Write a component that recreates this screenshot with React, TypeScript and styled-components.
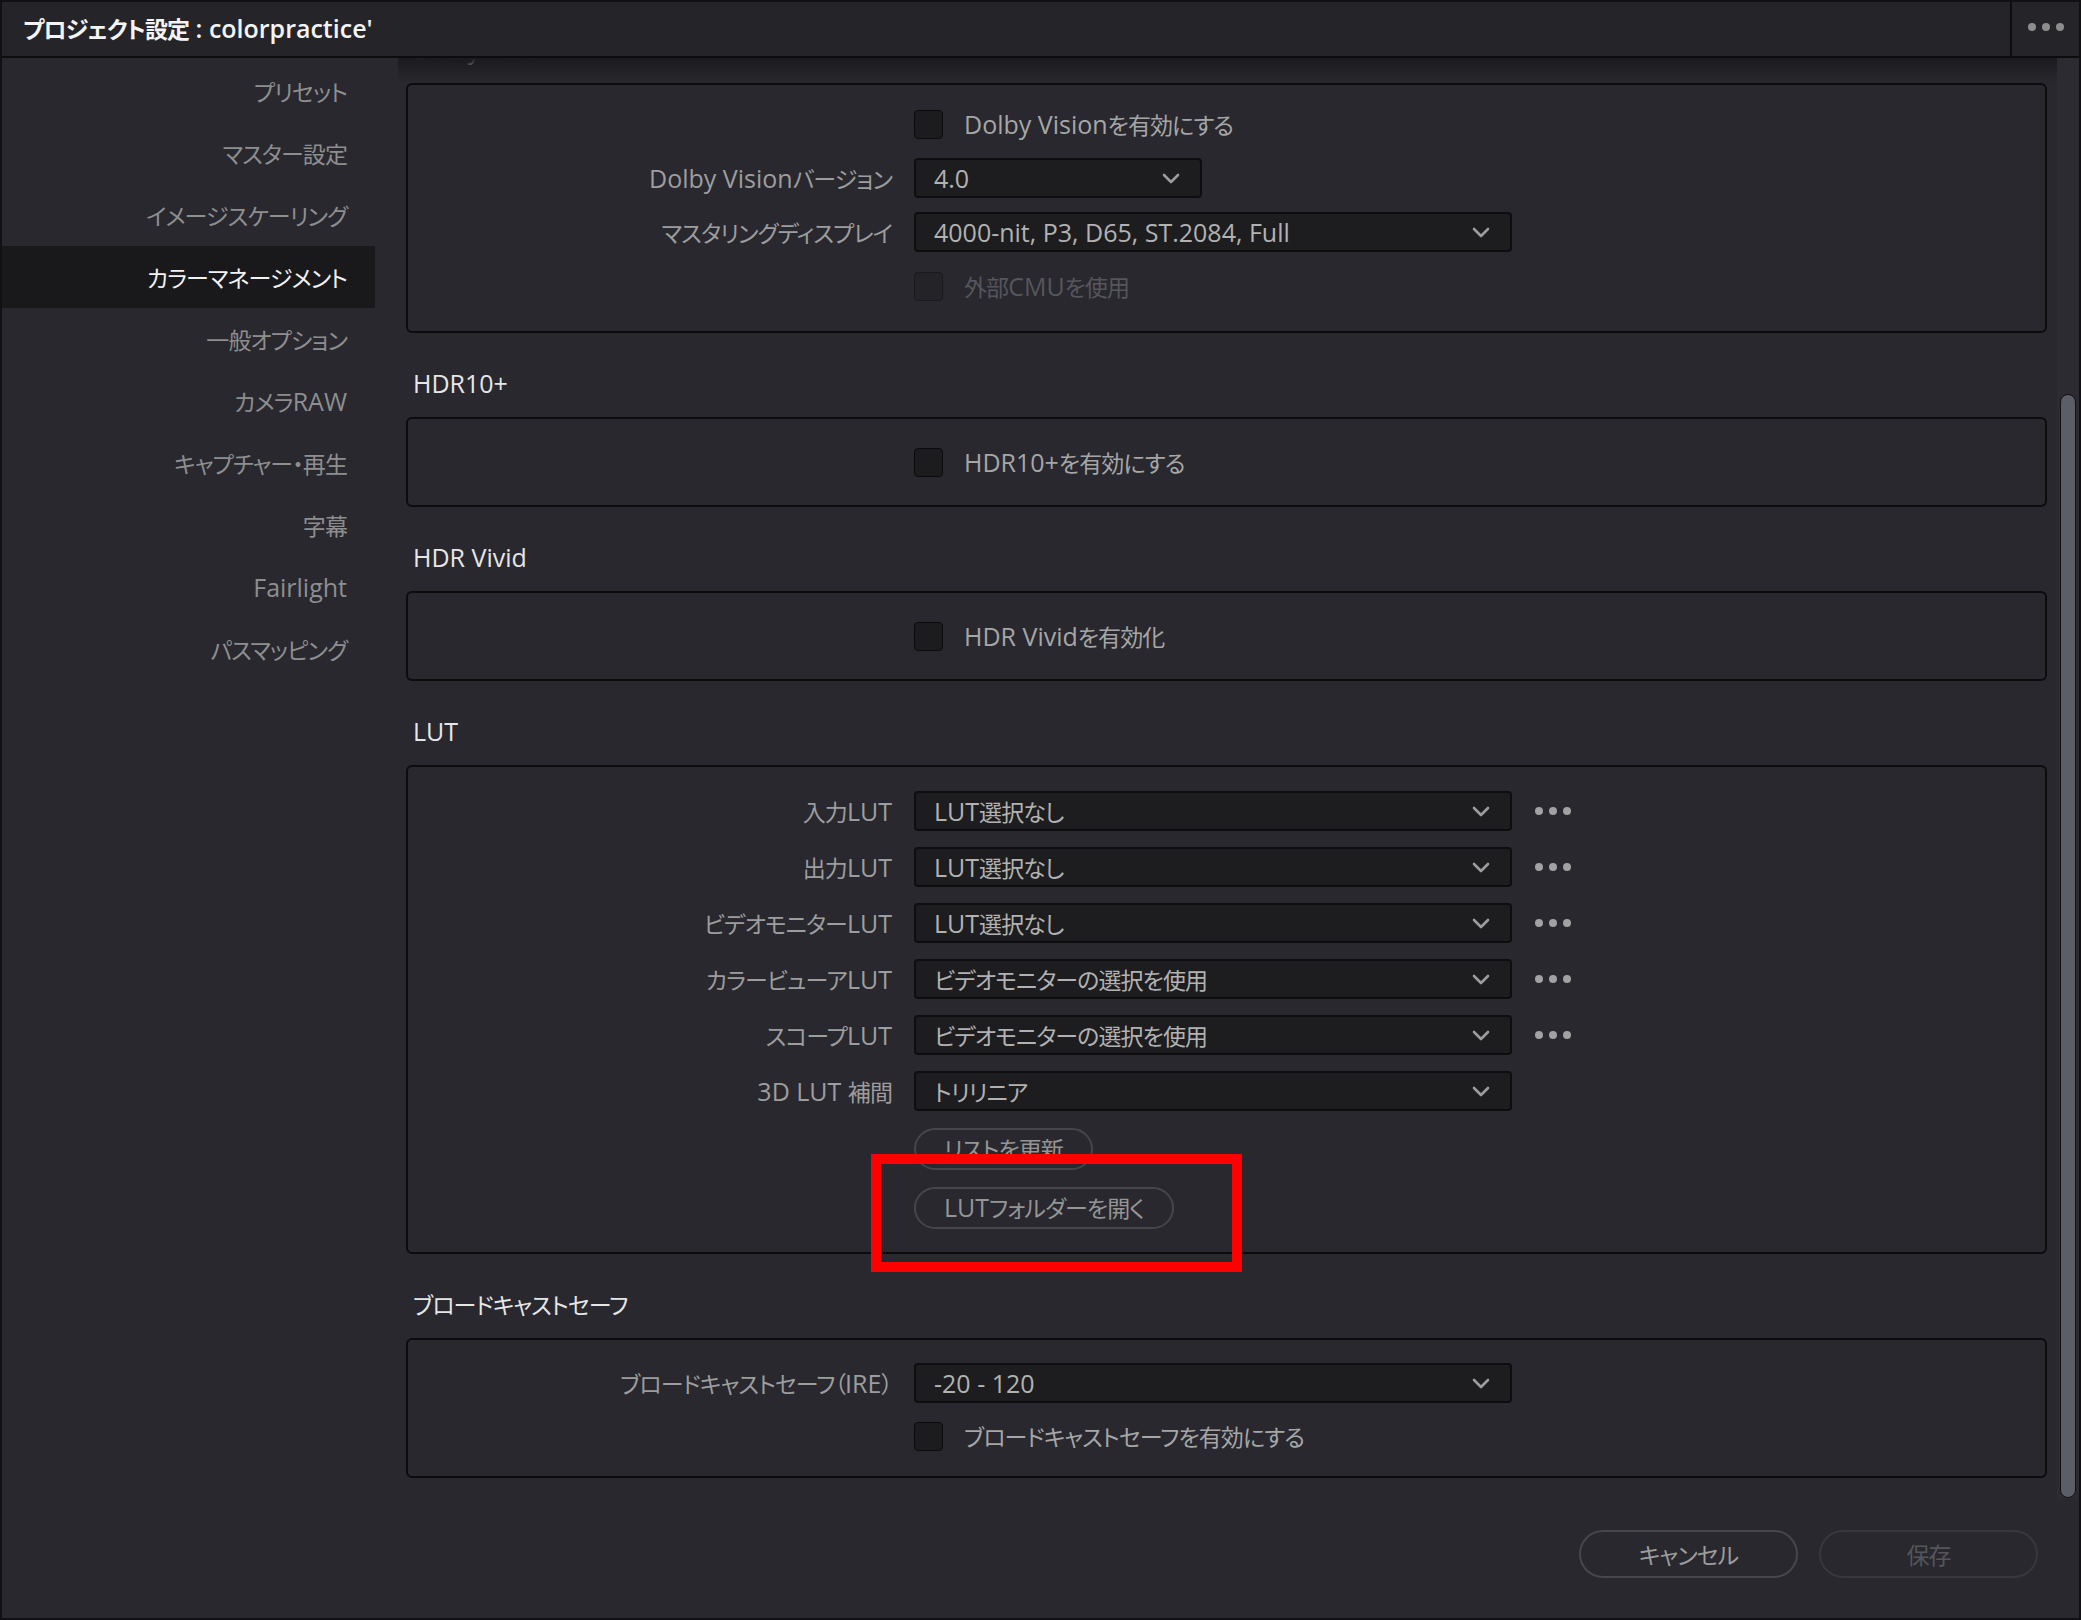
import React from 'react';
import styled, { createGlobalStyle } from 'styled-components';

const GlobalStyle = createGlobalStyle`
  html, body {
    margin: 0;
    padding: 0;
    background: #0c0c0d;
  }
  * {
    box-sizing: border-box;
  }
  body {
    font-family: "Open Sans", "Noto Sans CJK JP", sans-serif;
    font-size: 25px;
    font-feature-settings: "palt";
  }
`;

const sidebarItems = [
  'プリセット',
  'マスター設定',
  'イメージスケーリング',
  'カラーマネージメント',
  '一般オプション',
  'カメラRAW',
  'キャプチャー・再生',
  '字幕',
  'Fairlight',
  'パスマッピング',
];

const lutRows = [
  { label: '入力LUT', value: 'LUT選択なし', more: true },
  { label: '出力LUT', value: 'LUT選択なし', more: true },
  { label: 'ビデオモニターLUT', value: 'LUT選択なし', more: true },
  { label: 'カラービューアLUT', value: 'ビデオモニターの選択を使用', more: true },
  { label: 'スコープLUT', value: 'ビデオモニターの選択を使用', more: true },
  { label: '3D LUT 補間', value: 'トリリニア', more: false },
];

const CJK = /([\u3000-\u30ff\u4e00-\u9fff\uff00-\uffef]+)/;

function jp(text: string) {
  return text.split(CJK).map((part, i) =>
    CJK.test(part) ? <Kana key={i}>{part}</Kana> : part
  );
}

export default function App() {
  return (
    <>
      <GlobalStyle />
      <Window>
        <TitleBar>
          <TitleText>{jp('プロジェクト設定')} : colorpractice'</TitleText>
          <TitleMenu>
            <Dots color="#8d8d8d" />
          </TitleMenu>
        </TitleBar>

        <Body>
          <Sidebar>
            {sidebarItems.map((item, i) => (
              <SideItem key={item} $active={i === 3}>{jp(item)}</SideItem>
            ))}
          </Sidebar>

          <Main>
            <ViewportRow>
              <ScrollArea>
                <Section>
                  <SectionTitle>Dolby Vision</SectionTitle>
                  <Panel $pt={19} $pb={25} $gap={14}>
                    <FormRow>
                      <span />
                      <CheckField>
                        <Checkbox />
                        <CheckLabel>{jp('Dolby Visionを有効にする')}</CheckLabel>
                      </CheckField>
                    </FormRow>
                    <FormRow>
                      <Label>{jp('Dolby Visionバージョン')}</Label>
                      <Select value="4.0" width={288} />
                    </FormRow>
                    <FormRow>
                      <Label>{jp('マスタリングディスプレイ')}</Label>
                      <Select value="4000-nit, P3, D65, ST.2084, Full" />
                    </FormRow>
                    <FormRow>
                      <span />
                      <CheckField>
                        <Checkbox $disabled />
                        <CheckLabel $disabled>{jp('外部CMUを使用')}</CheckLabel>
                      </CheckField>
                    </FormRow>
                  </Panel>
                </Section>

                <Section>
                  <SectionTitle>HDR10+</SectionTitle>
                  <Panel $pt={23} $pb={23} $gap={0}>
                    <FormRow>
                      <span />
                      <CheckField>
                        <Checkbox />
                        <CheckLabel>{jp('HDR10+を有効にする')}</CheckLabel>
                      </CheckField>
                    </FormRow>
                  </Panel>
                </Section>

                <Section>
                  <SectionTitle>HDR Vivid</SectionTitle>
                  <Panel $pt={23} $pb={23} $gap={0}>
                    <FormRow>
                      <span />
                      <CheckField>
                        <Checkbox />
                        <CheckLabel>{jp('HDR Vividを有効化')}</CheckLabel>
                      </CheckField>
                    </FormRow>
                  </Panel>
                </Section>

                <Section>
                  <SectionTitle>LUT</SectionTitle>
                  <Panel $pt={24} $pb={23} $gap={16}>
                    {lutRows.map((row) => (
                      <FormRow key={row.label}>
                        <Label>{jp(row.label)}</Label>
                        <ControlGroup>
                          <Select value={row.value} />
                          {row.more && <MoreButton><Dots color="#a2a2a2" /></MoreButton>}
                        </ControlGroup>
                      </FormRow>
                    ))}
                    <ButtonRow>
                      <span />
                      <ButtonStack>
                        <PillButton>{jp('リストを更新')}</PillButton>
                        <Marked>
                          <PillButton>{jp('LUTフォルダーを開く')}</PillButton>
                          <Highlight />
                        </Marked>
                      </ButtonStack>
                    </ButtonRow>
                  </Panel>
                </Section>

                <Section>
                  <SectionTitle>{jp('ブロードキャストセーフ')}</SectionTitle>
                  <Panel $pt={23} $pb={20} $gap={13}>
                    <FormRow>
                      <Label>{jp('ブロードキャストセーフ（IRE）')}</Label>
                      <Select value="-20 - 120" />
                    </FormRow>
                    <FormRow>
                      <span />
                      <CheckField>
                        <Checkbox />
                        <CheckLabel>{jp('ブロードキャストセーフを有効にする')}</CheckLabel>
                      </CheckField>
                    </FormRow>
                  </Panel>
                </Section>
              </ScrollArea>

              <ScrollTrack>
                <ScrollThumb />
              </ScrollTrack>
            </ViewportRow>

            <Footer>
              <FooterButton>{jp('キャンセル')}</FooterButton>
              <FooterButton $muted>{jp('保存')}</FooterButton>
            </Footer>
          </Main>
        </Body>
      </Window>
    </>
  );
}

function Dots({ color }: { color: string }) {
  return (
    <svg width="36" height="10" viewBox="0 0 36 10">
      <circle cx="4" cy="5" r="4" fill={color} />
      <circle cx="18" cy="5" r="4" fill={color} />
      <circle cx="32" cy="5" r="4" fill={color} />
    </svg>
  );
}

function Select({ value, width = 598 }: { value: string; width?: number }) {
  return (
    <SelectBox $w={width}>
      <SelectText>{jp(value)}</SelectText>
      <svg width="18" height="11" viewBox="0 0 18 11">
        <polyline points="2,2 9,9 16,2" fill="none" stroke="#9c9c9c" strokeWidth="2.6" strokeLinecap="round" strokeLinejoin="round" />
      </svg>
    </SelectBox>
  );
}

const Kana = styled.span`
  font-size: 0.92em;
  letter-spacing: -0.04em;
`;

const Window = styled.div`
  width: 2081px;
  height: 1620px;
  border: 2px solid #111113;
  background: #28282e;
  display: flex;
  flex-direction: column;
  overflow: hidden;
`;

const TitleBar = styled.header`
  height: 56px;
  flex: none;
  display: flex;
  align-items: stretch;
  background: #242429;
  border-bottom: 2px solid #0d0d0f;
`;

const TitleText = styled.div`
  flex: 1;
  display: flex;
  align-items: center;
  white-space: pre;
  padding-left: 21px;
  padding-bottom: 2px;
  color: #f4f4f4;
  font-weight: 600;
`;

const TitleMenu = styled.div`
  width: 69px;
  display: flex;
  align-items: center;
  justify-content: center;
  border-left: 2px solid #0d0d0f;
  padding-bottom: 4px;
`;

const Body = styled.div`
  flex: 1;
  display: flex;
  min-height: 0;
`;

const Sidebar = styled.nav`
  width: 396px;
  flex: none;
  padding-top: 2px;
  display: flex;
  flex-direction: column;
  background: #28282e;
`;

const SideItem = styled.div<{ $active?: boolean }>`
  width: 373px;
  height: 62px;
  display: flex;
  align-items: center;
  justify-content: flex-end;
  padding-right: 28px;
  color: ${(p) => (p.$active ? '#f2f2f2' : '#8e8e8e')};
  background: ${(p) => (p.$active ? '#19191c' : 'transparent')};
`;

const Main = styled.div`
  flex: 1;
  display: flex;
  flex-direction: column;
  min-width: 0;
`;

const ViewportRow = styled.div`
  height: 1441px;
  flex: none;
  display: flex;
`;

const ScrollArea = styled.div`
  flex: 1;
  position: relative;
  overflow: hidden;
  display: flex;
  flex-direction: column;
  justify-content: flex-end;
  gap: 34px;
  padding: 0 10px 21px 8px;

  &::after {
    content: '';
    position: absolute;
    top: 0;
    left: 0;
    right: 0;
    height: 26px;
    background: linear-gradient(#1b1b1f, rgba(40, 40, 46, 0));
    pointer-events: none;
  }
`;

const ScrollTrack = styled.div`
  width: 22px;
  flex: none;
  display: flex;
  flex-direction: column;
  justify-content: flex-end;
  padding: 0 3px 1px 3px;
  background: #2b2b31;
`;

const ScrollThumb = styled.div`
  height: 1104px;
  border-radius: 8px;
  background: #5b5e66;
  border: 1px solid #111114;
`;

const Section = styled.section`
  display: flex;
  flex-direction: column;
  flex: none;
`;

const SectionTitle = styled.h2`
  margin: 0 0 18px 0;
  height: 32px;
  line-height: 32px;
  padding-left: 7px;
  font-size: 25px;
  font-weight: 400;
  color: #e6e6e6;
`;

const Panel = styled.div<{ $pt: number; $pb: number; $gap: number }>`
  border: 2px solid #0c0c0d;
  border-radius: 6px;
  padding: ${(p) => p.$pt}px 0 ${(p) => p.$pb}px 0;
  display: flex;
  flex-direction: column;
  gap: ${(p) => p.$gap}px;
`;

const FormRow = styled.div`
  height: 40px;
  display: grid;
  grid-template-columns: 484px auto;
  column-gap: 22px;
  align-items: center;
`;

const Label = styled.div`
  text-align: right;
  color: #9d9d9d;
  white-space: nowrap;
`;

const ControlGroup = styled.div`
  display: flex;
  align-items: center;
  gap: 23px;
`;

const CheckField = styled.label`
  display: flex;
  align-items: center;
  gap: 21px;
`;

const Checkbox = styled.span<{ $disabled?: boolean }>`
  width: 29px;
  height: 29px;
  border-radius: 4px;
  background: ${(p) => (p.$disabled ? '#242428' : '#1c1c1e')};
  border: 1px solid ${(p) => (p.$disabled ? '#1a1a1d' : '#0b0b0c')};
`;

const CheckLabel = styled.span<{ $disabled?: boolean }>`
  color: ${(p) => (p.$disabled ? '#56565b' : '#a6a6a6')};
  white-space: nowrap;
`;

const SelectBox = styled.div<{ $w: number }>`
  width: ${(p) => p.$w}px;
  height: 40px;
  display: flex;
  align-items: center;
  justify-content: space-between;
  padding: 0 20px 0 18px;
  background: #1d1d1f;
  border: 2px solid #0e0e10;
  border-radius: 4px;
`;

const SelectText = styled.span`
  color: #b2b2b2;
  white-space: nowrap;
`;

const MoreButton = styled.div`
  display: flex;
  align-items: center;
`;

const ButtonRow = styled.div`
  display: grid;
  grid-template-columns: 484px auto;
  column-gap: 22px;
  padding-top: 1px;
`;

const ButtonStack = styled.div`
  display: flex;
  flex-direction: column;
  align-items: flex-start;
  gap: 17px;
`;

const PillButton = styled.button`
  height: 42px;
  padding: 0 28px 2px;
  border-radius: 21px;
  border: 2px solid #45464c;
  background: transparent;
  color: #959595;
  font-family: inherit;
  font-size: 25px;
  font-feature-settings: "palt";
`;

const Marked = styled.div`
  position: relative;
`;

const Highlight = styled.div`
  position: absolute;
  top: -33px;
  left: -43px;
  width: 371px;
  height: 118px;
  border: 10px solid #ff0000;
  z-index: 2;
  pointer-events: none;
`;

const Footer = styled.footer`
  flex: 1;
  display: flex;
  justify-content: flex-end;
  align-items: flex-start;
  gap: 21px;
  padding: 31px 41px 0 0;
`;

const FooterButton = styled.button<{ $muted?: boolean }>`
  width: 219px;
  height: 48px;
  border-radius: 24px;
  background: transparent;
  border: 2px solid ${(p) => (p.$muted ? '#37383d' : '#46474d')};
  color: ${(p) => (p.$muted ? '#55565b' : '#9c9c9c')};
  font-family: inherit;
  font-size: 25px;
  font-feature-settings: "palt";
  padding-bottom: 2px;
`;
